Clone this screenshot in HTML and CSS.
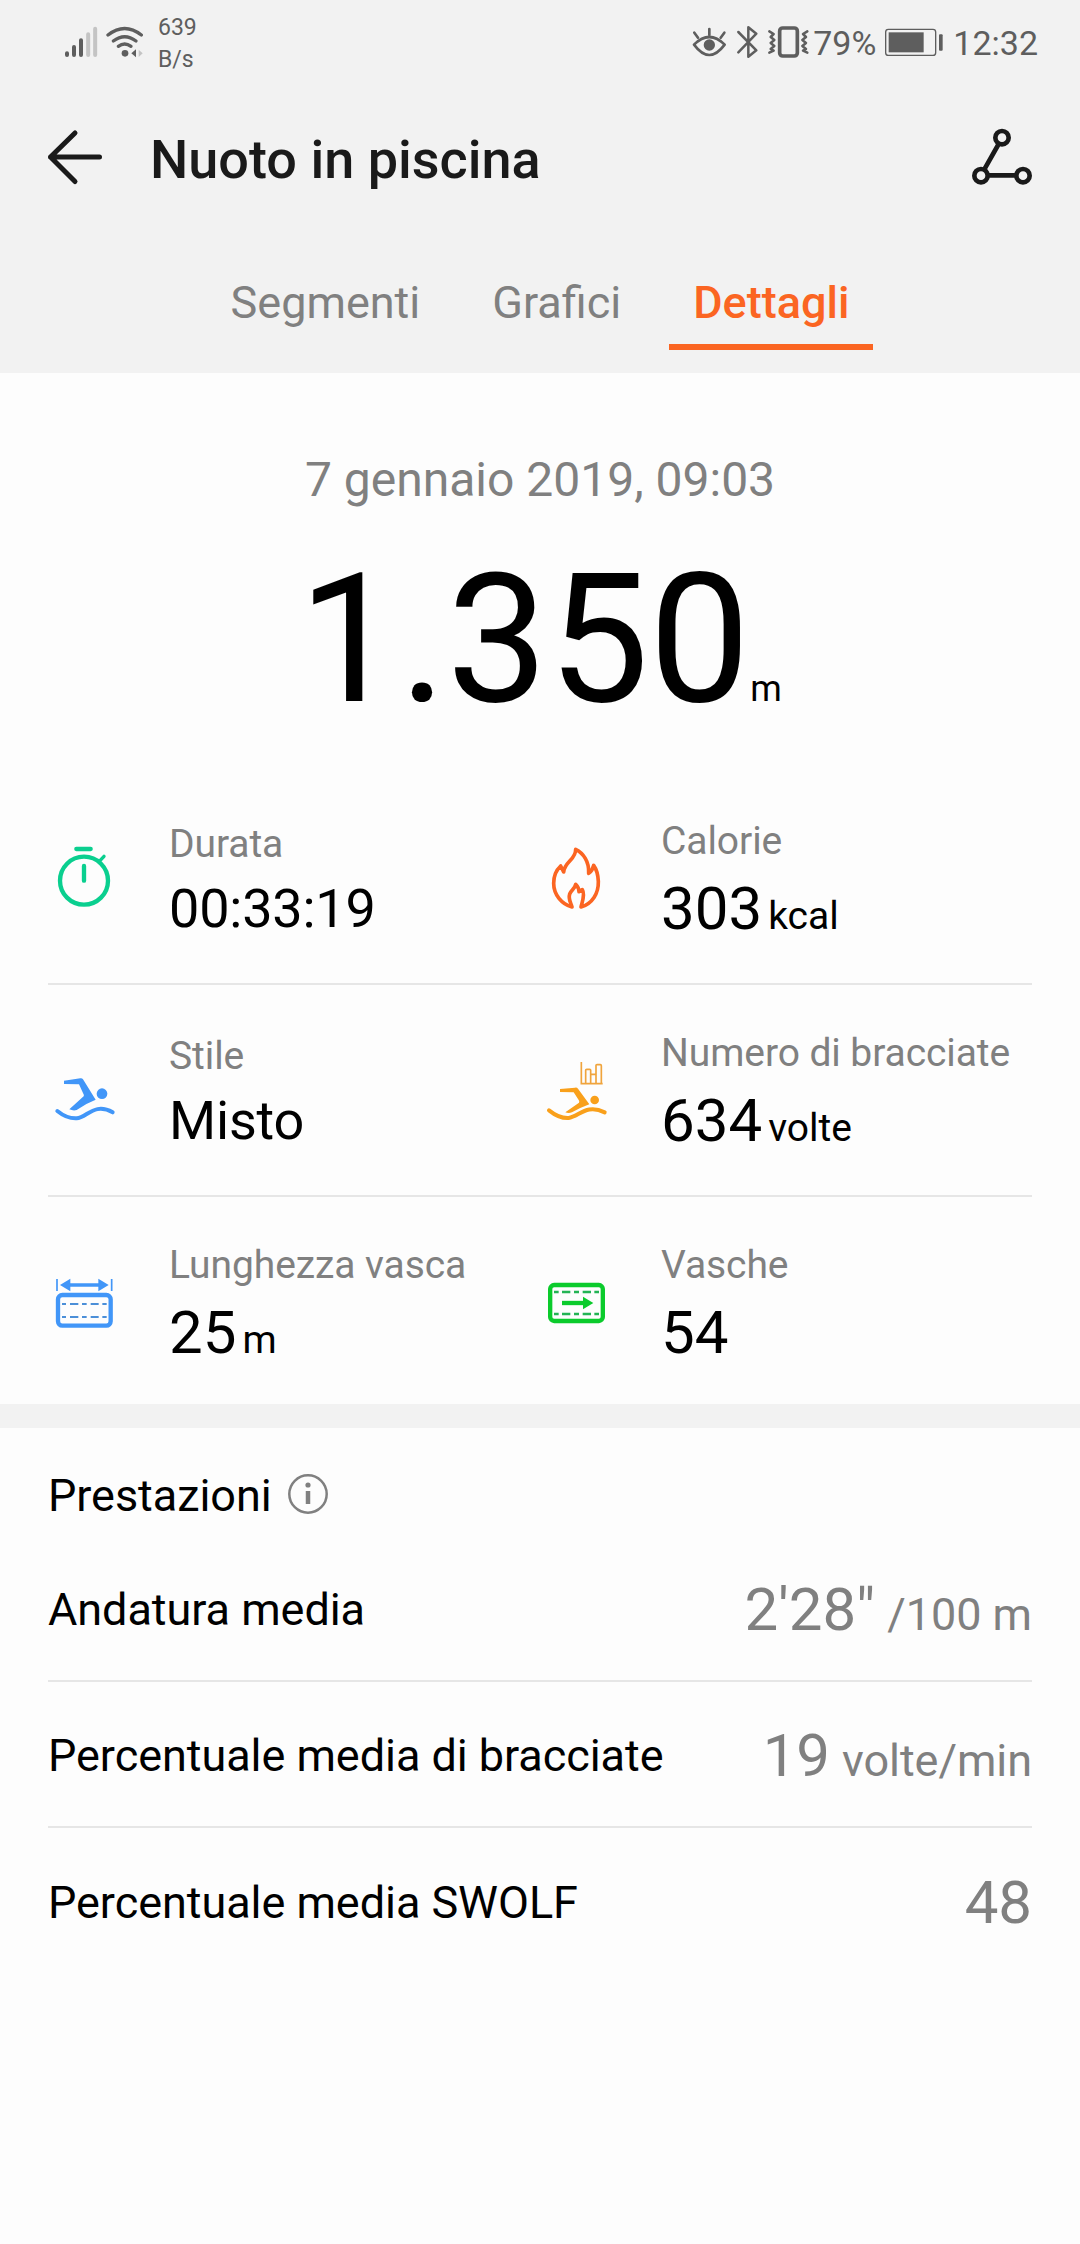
FILE: index.html
```html
<!DOCTYPE html>
<html lang="it">
<head>
<meta charset="utf-8">
<title>Nuoto in piscina</title>
<link rel="stylesheet" href="styles.css">
</head>
<body>
<header class="top">
  <div class="status">
    <div class="status-group">
      <svg class="signal" width="86" height="40" viewBox="72 66 258 120">
        <g stroke-linecap="round" stroke-width="12" fill="none">
          <path d="M81 160v5M102 141v24M123 121v44" stroke="#5e5e5e"/>
          <path d="M144.500 103v62M165.500 86v79" stroke="#c4c4c4"/>
        </g>
        <g stroke="#5e5e5e" stroke-width="10" stroke-linecap="round" fill="none">
          <path d="M204 105Q254 66 304 105"/>
          <path d="M220 123Q254 97 288 123"/>
          <path d="M235 139Q254 125 273 139"/>
        </g>
        <circle cx="255" cy="160" r="10" fill="#5e5e5e"/>
        <path d="M274 160l14-12v24z" fill="#5e5e5e"/>
        <path d="M308 160l-12-11v22z" fill="#c4c4c4"/>
      </svg>
      <div class="speed"><span>639</span><span>B/s</span></div>
    </div>
    <div class="status-group status-right">
      <svg width="122" height="40" viewBox="30 66 366 120" fill="none" stroke="#5e5e5e" stroke-linecap="round" stroke-linejoin="round">
        <path d="M42 134Q88 88 134 134Q88 196 42 134Z" stroke-width="8"/>
        <circle cx="88" cy="135" r="17" fill="#5e5e5e" stroke="none"/>
        <path d="M88 105V87M54 113L43 98M122 113L133 98" stroke-width="8"/>
        <path d="M175 96L229 151L205 170V82L229 101L175 157" stroke-width="7.500"/>
        <rect x="299" y="84" width="53" height="84" rx="9" stroke-width="11"/>
        <path d="M268 94l13 8l-9 9l11 9l-11 9l11 9l-11 9l9 5l-13 6M382 94l-13 8l9 9l-11 9l11 9l-11 9l11 9l-9 5l13 6" stroke-width="7.500"/>
      </svg>
      <span class="battery-level">79%</span>
      <svg width="60" height="40" viewBox="615 66 180 120">
        <rect x="620" y="88" width="150" height="78" rx="8" fill="none" stroke="#5e5e5e" stroke-width="4"/>
        <rect x="629" y="97" width="105" height="60" fill="#5e5e5e"/>
        <rect x="780" y="103" width="11" height="49" rx="3" fill="#5e5e5e"/>
      </svg>
      <span class="clock">12:32</span>
    </div>
  </div>
  <div class="appbar">
    <svg width="60" height="60" viewBox="0 0 60 60" fill="none" stroke="#1a1a1a" stroke-width="5" stroke-linecap="round" stroke-linejoin="round"><path d="M53.500 30H4.500M29 6L4.500 30L29 54.500"/></svg>
    <h1>Nuoto in piscina</h1>
    <svg width="64" height="60" viewBox="1230 82 192 180" fill="none" stroke="#1a1a1a" stroke-width="14"><circle cx="1326" cy="114" r="20"/><circle cx="1263" cy="228" r="20"/><circle cx="1389" cy="228" r="20"/><path d="M1316 133L1273 209M1284 227H1368"/></svg>
  </div>
  <nav class="tabs">
    <a class="tab">Segmenti</a>
    <a class="tab">Grafici</a>
    <a class="tab active">Dettagli</a>
  </nav>
</header>
<main>
  <section class="summary">
    <p class="date">7 gennaio 2019, 09:03</p>
    <p class="distance">1.350<small>m</small></p>
  </section>
  <section class="stats">
    <div class="row">
      <div class="cell">
        <svg class="icon" viewBox="54 66 216 216" fill="none" stroke="#0acf8f" stroke-linecap="round"><circle cx="162" cy="182" r="72" stroke-width="13"/><path d="M139 87H182M162 138V182" stroke-width="13"/><path d="M210 122L222 109" stroke-width="10"/></svg>
        <div class="info"><span class="label">Durata</span><span class="value text">00:33:19</span></div>
      </div>
      <div class="cell">
        <svg class="icon" viewBox="30 66 216 216" fill="none" stroke="#fb6522" stroke-width="11" stroke-linejoin="round" stroke-linecap="round"><path d="M126 261C122 247 114 237 119 222C124 210 135 206 137 193C143 199 147 207 147 215L157 209C166 224 157 244 153 261C187 251 206 220 205 184C204 162 199 147 191 136C189 147 184 154 176 160C178 125 160 99 137 88C138 119 104 124 101 156L92 138C80 149 71 168 71 190C71 224 95 253 126 261Z"/></svg>
        <div class="info"><span class="label">Calorie</span><span class="value">303<small>kcal</small></span></div>
      </div>
    </div>
    <div class="row">
      <div class="cell">
        <svg class="icon" viewBox="54 42 216 216" fill="#4196f8"><path d="M102 122L151 115Q156 114 159 118L197 179Q168 190 140 210Q130 213 118 208L161 169Q163 165 160 161L147 133L102 132Z"/><circle cx="216" cy="161" r="16"/><path d="M82 213C103 230 122 236 140 235C171 233 193 186 248 217" fill="none" stroke="#4196f8" stroke-width="12" stroke-linecap="round"/></svg>
        <div class="info"><span class="label">Stile</span><span class="value text">Misto</span></div>
      </div>
      <div class="cell">
        <svg class="icon" viewBox="30 42 216 216" fill="#f9a01b"><path d="M90 147L135 143Q141 142 144 146L178 193Q153 202 126 217Q116 221 106 217L147 188Q149 184 146 180L131 157L90 156Z"/><circle cx="194" cy="180" r="13"/><path d="M57 211C78 228 97 235 116 234C147 230 169 190 224 217" fill="none" stroke="#f9a01b" stroke-width="12" stroke-linecap="round"/><path d="M154 66V131H218M167 130V91Q167 88 170 88H179Q182 88 182 91V130M182 103H198M198 130V76Q198 74 201 74H211Q214 74 214 77V130" fill="none" stroke="#f0a43c" stroke-width="5"/></svg>
        <div class="info"><span class="label">Numero di bracciate</span><span class="value">634<small>volte</small></span></div>
      </div>
    </div>
    <div class="row">
      <div class="cell">
        <svg class="icon" viewBox="54 48 216 216" fill="none" stroke="#4196f8"><rect x="84" y="135" width="158" height="92" rx="13" stroke-width="13"/><path d="M81 87V123M245 87V123" stroke-width="5"/><path d="M110 105H216" stroke-width="11"/><path d="M90 105L121 86V124ZM236 105L205 86V124Z" fill="#4196f8" stroke="none"/><path d="M96 162H108M120 162H145M156 162H170M182 162H206M217 162H230M96 201H108M120 201H145M156 201H170M182 201H206M217 201H230" stroke-width="6" stroke="#4b8fd8"/></svg>
        <div class="info"><span class="label">Lunghezza vasca</span><span class="value">25<small>m</small></span></div>
      </div>
      <div class="cell">
        <svg class="icon" viewBox="30 48 216 216" fill="none" stroke="#0bcb2c"><rect x="60.500" y="105" width="158" height="108" rx="12" stroke-width="13"/><path d="M96 159H165" stroke-width="13"/><path d="M159 140L190 159L159 178Z" fill="#0bcb2c" stroke="none"/><path d="M72 126H86M96 126H121M132 126H147M158 126H183M193 126H207M72 192H86M96 192H121M132 192H147M158 192H183M193 192H207" stroke-width="7" stroke="#23b454"/></svg>
        <div class="info"><span class="label">Vasche</span><span class="value">54</span></div>
      </div>
    </div>
  </section>
  <section class="performance">
    <h2>Prestazioni<svg width="42" height="42" viewBox="0 0 42 42" fill="none" stroke="#808080"><circle cx="21" cy="21" r="18.700" stroke-width="2.500"/><path d="M21 18V31" stroke-width="4.500"/><circle cx="21" cy="12" r="2.600" fill="#808080" stroke="none"/></svg></h2>
    <div class="metric"><span>Andatura media</span><span class="result">2'28"<small>/100 m</small></span></div>
    <div class="metric"><span>Percentuale media di bracciate</span><span class="result">19<small>volte/min</small></span></div>
    <div class="metric"><span>Percentuale media SWOLF</span><span class="result">48</span></div>
  </section>
</main>
</body>
</html>
```
FILE: styles.css
```css
* { box-sizing: border-box; margin: 0; padding: 0; }
body { width: 1080px; min-height: 2244px; background: #fdfdfd; color: #000; font-family: Roboto, "Noto Sans", sans-serif; }
svg { display: block; flex: none; }
h1, h2 { font-weight: 400; }
.top { height: 373px; background: #f2f2f2; }

.status { height: 87px; display: flex; justify-content: space-between; padding: 0 42px 0 64px; color: #5e5e5e; }
.status svg { margin-bottom: 3px; }
.status-group { display: flex; align-items: center; }
.speed { display: flex; flex-direction: column; margin-left: 8px; font-size: 23px; line-height: 31.500px; }
.status-right { font-size: 34px; line-height: 38px; }
.status-right span { margin-bottom: 1px; }
.battery-level { margin: 0 8px 0 1px; }
.clock { margin-left: 9px; }

.appbar { height: 141px; display: flex; align-items: center; padding: 0 46px; }
.appbar svg { margin-bottom: 1px; }
.appbar h1 { flex: 1; margin-left: 44px; padding-top: 4px; font-size: 54px; font-weight: 500; color: #1a1a1a; }
.tabs { display: flex; justify-content: center; gap: 24px; padding-top: 27px; font-size: 45px; line-height: 95px; color: #808080; }
.tab { height: 95px; padding: 0 24px; }
.tab.active { color: #fb6522; font-weight: 500; box-shadow: inset 0 -6px #fb6522; }

.summary { padding-top: 77px; text-align: center; }
.date { font-size: 48px; line-height: 60px; color: #808080; }
.distance { margin-top: 40px; font-size: 180px; line-height: 180px; }
.distance small { font-size: 36px; line-height: 1; }

.stats { margin-top: 43px; padding: 0 48px; }
.row { height: 212px; display: grid; grid-template-columns: 1fr 1fr; border-bottom: 2px solid #e6e6e6; }
.row:last-child { height: 207px; border-bottom: 0; }
.cell { display: flex; align-items: center; gap: 49px; height: 212px; }
.icon { width: 72px; height: 72px; margin-bottom: 2px; }
.info { display: flex; flex-direction: column; gap: 10px; padding-top: 3px; white-space: nowrap; }
.label { font-size: 39px; line-height: 46px; letter-spacing: -.08px; color: #808080; }
.value { font-size: 60px; line-height: 70px; }
.value.text { font-size: 54px; line-height: 63px; letter-spacing: -.2px; }
.value small { margin-left: 6px; font-size: 39px; line-height: 1; }

.performance { border-top: 24px solid #f2f2f2; padding: 0 48px; font-size: 45px; letter-spacing: -.05px; }
.performance h2 { height: 108px; display: flex; align-items: center; gap: 15px; padding-top: 26px; font-size: 45px; }
.performance h2 svg { margin-bottom: 2px; }
.metric { height: 146px; display: flex; align-items: center; justify-content: space-between; padding-top: 3px; border-bottom: 2px solid #e6e6e6; }
.metric:last-child { border-bottom: 0; }
.result { font-size: 60px; color: #808080; }
.result small { margin-left: 12px; font-size: 45px; line-height: 1; }
```
